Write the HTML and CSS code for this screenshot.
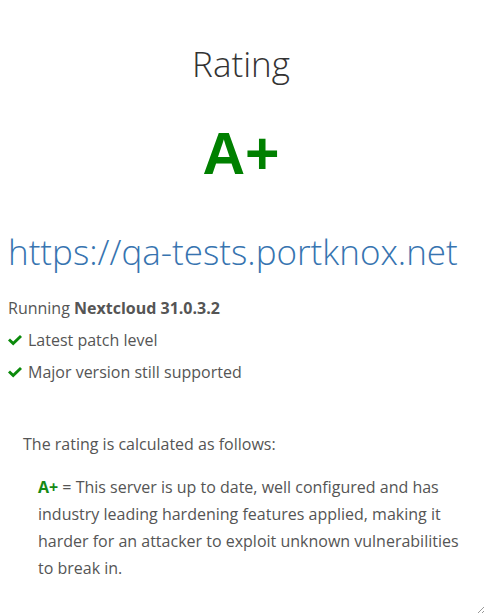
FILE: index.html
```html
<!DOCTYPE html>
<html>
<head>
<meta charset="utf-8">
<link rel="stylesheet" href="styles.css">
</head>
<body>
<div class="page">
  <h1 class="title">Rating</h1>
  <div class="grade">A+</div>
  <div class="url">https://qa-tests.portknox.net</div>
  <p class="running">Running <b>Nextcloud 31.0.3.2</b></p>
  <ul class="checks">
    <li><svg class="tick" viewBox="0 0 14 11" width="14" height="11"><path d="M0 5.6 L2 3.6 L5.2 6.6 L12 0 L14 2 L5.2 10.6 Z" fill="#0b8a0b"/></svg>Latest patch level</li>
    <li><svg class="tick" viewBox="0 0 14 11" width="14" height="11"><path d="M0 5.6 L2 3.6 L5.2 6.6 L12 0 L14 2 L5.2 10.6 Z" fill="#0b8a0b"/></svg>Major version still supported</li>
  </ul>
  <div class="explain">
    <p class="explain-head">The rating is calculated as follows:</p>
    <p class="explain-item"><b class="g">A+</b> = This server is up to date, well configured and has industry leading hardening features applied, making it harder for an attacker to exploit unknown vulnerabilities to break in.</p>
  </div>
</div>
<svg class="grip" width="8" height="8" viewBox="0 0 8 8"><path d="M7 1 L1 7 M7 5 L5 7" stroke="#999" stroke-width="1"/></svg>
</body>
</html>
```
FILE: styles.css
```css
html, body {
  margin: 0;
  padding: 0;
  background: #fff;
}
body {
  font-family: "Open Sans", sans-serif;
  color: #555;
  font-size: 16px;
  height: 615px;
  overflow: hidden;
}
.page {
  padding: 0 12px 0 8px;
}
.title {
  margin: 0;
  padding-top: 40px;
  text-align: center;
  font-weight: 300;
  font-size: 35px;
  line-height: 48px;
  color: #333;
}
.grade {
  margin-top: 30px;
  text-align: center;
  font-family: "Liberation Sans", Arial, sans-serif;
  font-weight: bold;
  font-size: 59px;
  line-height: 72px;
  color: #008000;
}
.url {
  margin-top: 38px;
  font-weight: 300;
  font-size: 35px;
  line-height: 48px;
  color: #3774b0;
  white-space: nowrap;
}
.running {
  margin: 16px 0 0;
  line-height: 32px;
}
.running b {
  font-weight: 700;
}
.checks {
  list-style: none;
  margin: 0;
  padding: 0;
}
.checks li {
  line-height: 32px;
  display: flex;
  align-items: center;
}
.tick {
  margin-right: 6px;
}
.explain {
  margin-top: 40px;
  padding: 0 15px;
}
.explain-head {
  margin: 0;
  line-height: 32px;
}
.explain-item {
  margin: 14px 0 0;
  padding-left: 15px;
  line-height: 27px;
}
.g {
  color: #158a15;
}
.grip {
  position: absolute;
  right: 1px;
  bottom: 1px;
}
```
